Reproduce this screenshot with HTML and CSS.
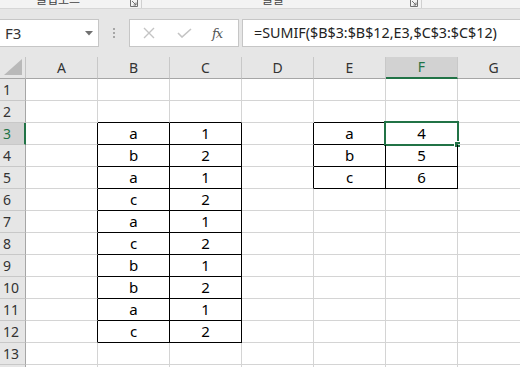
FILE: index.html
```html
<!DOCTYPE html>
<html lang="ko">
<head>
    <meta charset="UTF-8">
    <title>SUMIF</title>
    <link rel="stylesheet" href="styles.css">
</head>
<body>
    <!-- 리본 아래쪽 (잘린 그룹 이름) -->
    <div class="ribbon">
        <span class="grp grp-clip">클립보드</span>
        <span class="launcher launcher-clip"><svg width="8" height="7" viewBox="0 0 8 7"><path d="M0.5 0 V6.5 H7.5 V0" fill="none" stroke="#707070"/><path d="M2 1 L6 5 M3.5 5 H6 V2.5" fill="none" stroke="#707070"/></svg></span>
        <span class="rsep"></span>
        <span class="grp grp-font">글꼴</span>
        <span class="launcher launcher-font"><svg width="8" height="7" viewBox="0 0 8 7"><path d="M0.5 0 V6.5 H7.5 V0" fill="none" stroke="#707070"/><path d="M2 1 L6 5 M3.5 5 H6 V2.5" fill="none" stroke="#707070"/></svg></span>
        <span class="rsep"></span>
    </div>

    <!-- 이름 상자 + 수식 입력줄 -->
    <div class="fbar">
        <div class="namebox">
            <span>F3</span>
            <svg class="caret" width="8" height="5" viewBox="0 0 8 5"><path d="M0 0 H8 L4 4.5 Z" fill="#707070"/></svg>
        </div>
        <div class="dots"><i></i><i></i><i></i></div>
        <div class="fbtns">
            <svg width="12" height="12" viewBox="0 0 12 12"><path d="M1 1 L11 11 M11 1 L1 11" stroke="#c4c4c4" stroke-width="1.4"/></svg>
            <svg width="15" height="10" viewBox="0 0 15 10"><path d="M1 5 L5 9 L14 1" fill="none" stroke="#c4c4c4" stroke-width="1.6"/></svg>
            <span class="fx">fx</span>
        </div>
        <div class="formula">=SUMIF($B$3:$B$12,E3,$C$3:$C$12)</div>
    </div>

    <!-- 시트 -->
    <div class="sheet">
        <div class="row head">
            <div class="corner"><svg width="18" height="16" viewBox="0 0 18 16"><path d="M18 0 V16 H0 Z" fill="#b9b9b9"/></svg></div>
            <div class="ch">A</div><div class="ch">B</div><div class="ch">C</div><div class="ch">D</div>
            <div class="ch">E</div><div class="ch sel">F</div><div class="ch">G</div>
        </div>
        <div class="row">
            <div class="rh">1</div>
            <div class="c"></div><div class="c"></div><div class="c"></div><div class="c"></div>
            <div class="c"></div><div class="c"></div><div class="c"></div>
        </div>
        <div class="row">
            <div class="rh">2</div>
            <div class="c"></div><div class="c bt"></div><div class="c bt"></div><div class="c"></div>
            <div class="c bt"></div><div class="c bt"></div><div class="c"></div>
        </div>
        <div class="row">
            <div class="rh sel">3</div>
            <div class="c bl"></div><div class="c bx">a</div><div class="c bx">1</div><div class="c bl"></div>
            <div class="c bx">a</div><div class="c bx active">4<span class="cursor"><b></b></span></div><div class="c"></div>
        </div>
        <div class="row">
            <div class="rh">4</div>
            <div class="c bl"></div><div class="c bx">b</div><div class="c bx">2</div><div class="c bl"></div>
            <div class="c bx">b</div><div class="c bx">5</div><div class="c"></div>
        </div>
        <div class="row">
            <div class="rh">5</div>
            <div class="c bl"></div><div class="c bx">a</div><div class="c bx">1</div><div class="c bl"></div>
            <div class="c bx">c</div><div class="c bx">6</div><div class="c"></div>
        </div>
        <div class="row">
            <div class="rh">6</div>
            <div class="c bl"></div><div class="c bx">c</div><div class="c bx">2</div><div class="c"></div>
            <div class="c"></div><div class="c"></div><div class="c"></div>
        </div>
        <div class="row">
            <div class="rh">7</div>
            <div class="c bl"></div><div class="c bx">a</div><div class="c bx">1</div><div class="c"></div>
            <div class="c"></div><div class="c"></div><div class="c"></div>
        </div>
        <div class="row">
            <div class="rh">8</div>
            <div class="c bl"></div><div class="c bx">c</div><div class="c bx">2</div><div class="c"></div>
            <div class="c"></div><div class="c"></div><div class="c"></div>
        </div>
        <div class="row">
            <div class="rh">9</div>
            <div class="c bl"></div><div class="c bx">b</div><div class="c bx">1</div><div class="c"></div>
            <div class="c"></div><div class="c"></div><div class="c"></div>
        </div>
        <div class="row">
            <div class="rh">10</div>
            <div class="c bl"></div><div class="c bx">b</div><div class="c bx">2</div><div class="c"></div>
            <div class="c"></div><div class="c"></div><div class="c"></div>
        </div>
        <div class="row">
            <div class="rh">11</div>
            <div class="c bl"></div><div class="c bx">a</div><div class="c bx">1</div><div class="c"></div>
            <div class="c"></div><div class="c"></div><div class="c"></div>
        </div>
        <div class="row">
            <div class="rh">12</div>
            <div class="c bl"></div><div class="c bx">c</div><div class="c bx">2</div><div class="c"></div>
            <div class="c"></div><div class="c"></div><div class="c"></div>
        </div>
        <div class="row">
            <div class="rh">13</div>
            <div class="c"></div><div class="c"></div><div class="c"></div><div class="c"></div>
            <div class="c"></div><div class="c"></div><div class="c"></div>
        </div>
        <div class="row">
            <div class="rh"></div>
            <div class="c"></div><div class="c"></div><div class="c"></div><div class="c"></div>
            <div class="c"></div><div class="c"></div><div class="c"></div>
        </div>
    </div>
</body>
</html>
```

FILE: styles.css
```css
html, body {
    margin: 0;
    padding: 0;
    width: 520px;
    height: 367px;
    overflow: hidden;
    background-color: #ffffff;
    font-family: "Noto Sans", "Noto Sans CJK KR", sans-serif;
}

/* 리본 */
.ribbon {
    height: 8px;
    background-color: #f3f3f3;
    border-bottom: 1px solid #d6d6d6;
    display: flex;
    align-items: flex-end;
    overflow: hidden;
}
.grp {
    font-size: 12px;
    line-height: 12px;
    color: #444444;
    margin-bottom: 2px;
    flex: none;
}
.grp-clip {
    margin-left: 36px;
    width: 94px;
}
.grp-font {
    margin-left: 120px;
    width: 148px;
}
.launcher {
    display: flex;
    align-self: flex-start;
    width: 11px;
    flex: none;
}
.rsep {
    width: 1px;
    height: 8px;
    background-color: #d0d0d0;
    flex: none;
}

/* 수식 입력줄 */
.fbar {
    height: 38px;
    padding-top: 10px;
    background-color: #e6e6e6;
    display: flex;
    align-items: flex-start;
}
.namebox,
.fbtns,
.formula {
    height: 28px;
    box-sizing: border-box;
    background-color: #ffffff;
    border: 1px solid #c6c6c6;
    flex: none;
}
.namebox {
    width: 99px;
    border-left: none;
    display: flex;
    align-items: center;
    justify-content: space-between;
    padding: 0 5px 0 5px;
    font-size: 15px;
    color: #333333;
}
.caret {
    margin-top: 1px;
}
.dots {
    width: 30px;
    height: 28px;
    display: flex;
    flex-direction: column;
    align-items: center;
    justify-content: center;
    gap: 2px;
    flex: none;
}
.dots i {
    display: block;
    width: 2px;
    height: 2px;
    background-color: #a6a6a6;
}
.fbtns {
    width: 110px;
    display: flex;
    align-items: center;
    padding-left: 13px;
    gap: 23px;
}
.fbtns svg:nth-child(2) {
    margin-left: -1px;
}
.fx {
    font-family: "DejaVu Serif", serif;
    font-style: italic;
    font-size: 13px;
    color: #555555;
    margin-left: -3px;
    letter-spacing: -1px;
}
.formula {
    margin-left: 3px;
    width: 290px;
    padding-left: 11px;
    font-size: 14.3px;
    line-height: 26px;
    color: #222222;
    white-space: nowrap;
}

/* 시트 */
.row {
    display: flex;
    height: 22px;
}
.row.head {
    background-color: #e6e6e6;
}
.corner {
    width: 26px;
    box-sizing: border-box;
    border-right: 1px solid #c4c4c4;
    border-bottom: 1px solid #a6a6a6;
    display: flex;
    align-items: flex-end;
    padding: 0 3px 3px 4px;
    flex: none;
}
.ch {
    width: 72px;
    box-sizing: border-box;
    border-right: 1px solid #c8c8c8;
    border-bottom: 1px solid #a6a6a6;
    text-align: center;
    font-size: 14px;
    line-height: 21px;
    color: #333333;
    flex: none;
}
.ch.sel {
    background-color: #d2d2d2;
    border-bottom: 2px solid #217346;
    line-height: 20px;
    color: #217346;
}
.rh {
    width: 26px;
    box-sizing: border-box;
    background-color: #e6e6e6;
    border-right: 1px solid #a6a6a6;
    border-bottom: 1px solid #c8c8c8;
    padding-left: 3px;
    font-size: 14px;
    line-height: 21px;
    color: #333333;
    flex: none;
}
.rh.sel {
    background-color: #d2d2d2;
    border-right: 2px solid #217346;
    color: #217346;
}
.c {
    position: relative;
    width: 72px;
    box-sizing: border-box;
    border-right: 1px solid #d4d4d4;
    border-bottom: 1px solid #d4d4d4;
    text-align: center;
    font-size: 15px;
    line-height: 21px;
    color: #000000;
    flex: none;
}
.c.bl {
    border-right-color: #000000;
}
.c.bt {
    border-bottom-color: #000000;
}
.c.bx {
    border-right-color: #000000;
    border-bottom-color: #000000;
}

/* 선택 셀 테두리 */
.cursor {
    position: absolute;
    left: -2px;
    top: -2px;
    right: -2px;
    bottom: -2px;
    border: 2px solid #217346;
}
.cursor b {
    position: absolute;
    right: -4px;
    bottom: -4px;
    width: 5px;
    height: 5px;
    background-color: #217346;
    border: 1px solid #ffffff;
}
```
